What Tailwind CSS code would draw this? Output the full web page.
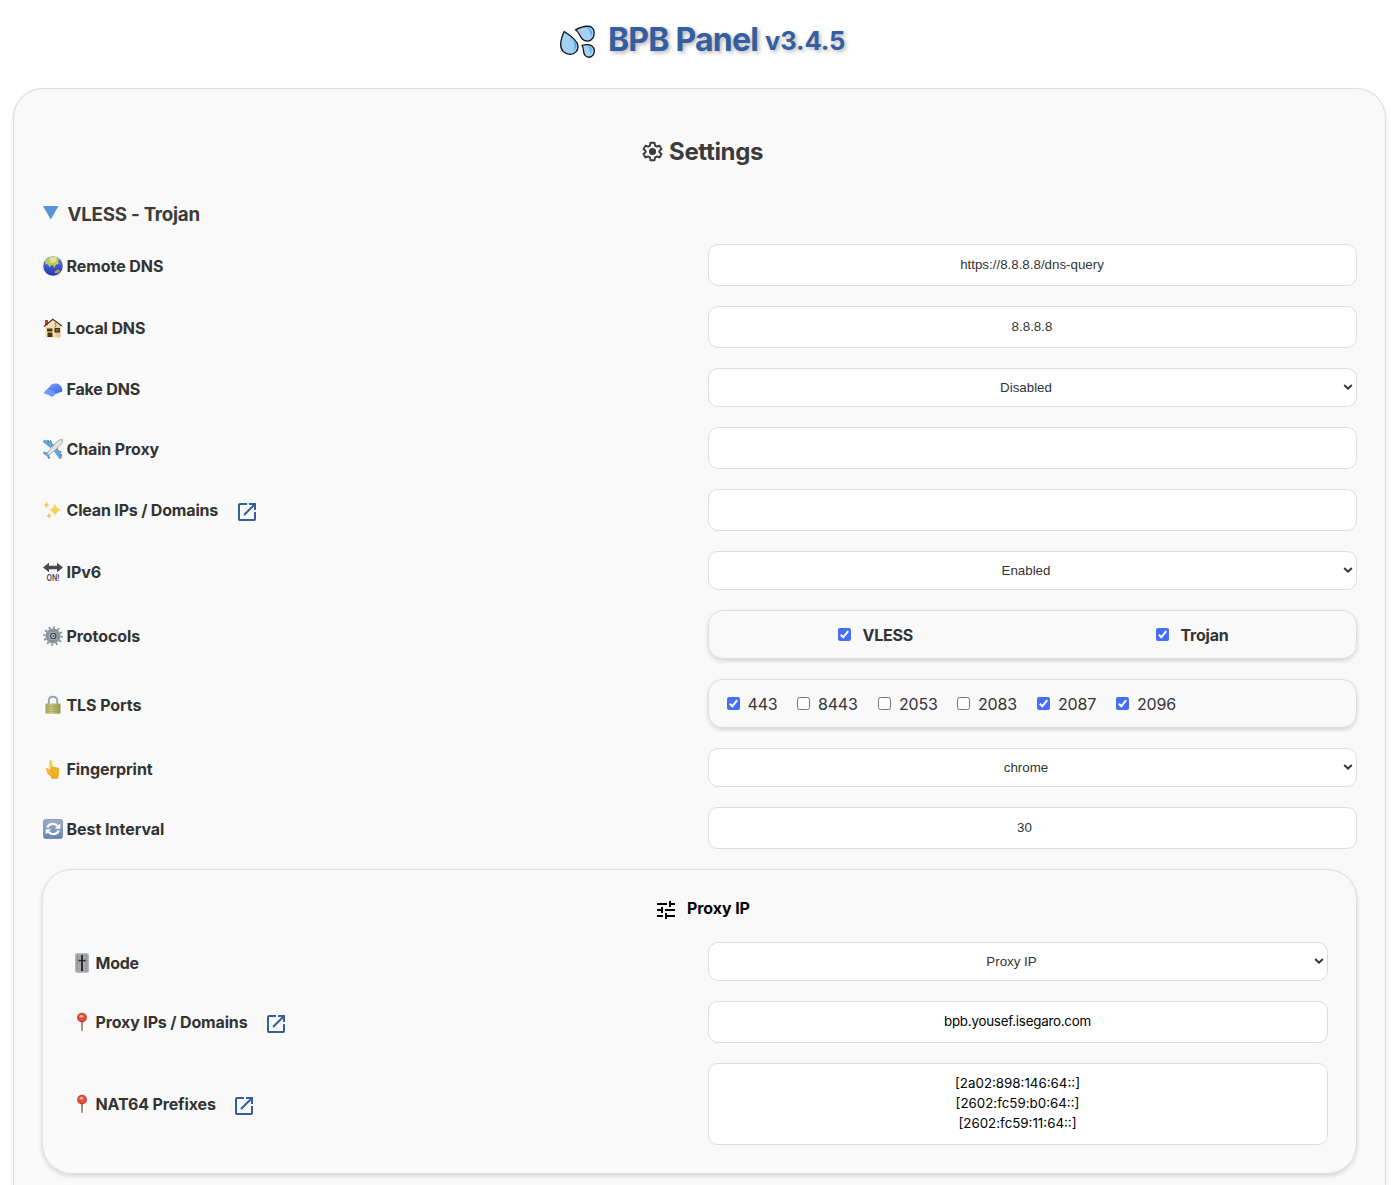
<!DOCTYPE html>
<html lang="en">
<head>
<meta charset="utf-8">
<title>BPB Panel</title>
<script src="https://cdn.jsdelivr.net/npm/@tailwindcss/browser@4"></script>
</head>
<body class="bg-white h-[1185px] overflow-hidden font-['Inter',sans-serif] text-[#333] text-base">
<svg class="absolute size-0">
  <defs>
    <symbol id="open" viewBox="0 0 24 24"><path d="M5 21q-.825 0-1.413-.587T3 19V5q0-.825.588-1.413T5 3h7v2H5v14h14v-7h2v7q0 .825-.587 1.413T19 21H5Zm4.700-5.300-1.400-1.400L17.600 5H14V3h7v7h-2V6.400l-9.300 9.300Z"/></symbol>
    <symbol id="pin" viewBox="0 0 20 20"><path d="M9 9h2l-.2 9.500q-.8 1-1.600 0z" fill="#9b8478"/><circle cx="10" cy="5.600" r="4.900" fill="#c8382b"/><circle cx="10" cy="5.200" r="4" fill="#e04e3c"/><ellipse cx="9.500" cy="4.300" rx="1.800" ry="1.300" fill="#ffb5a4"/></symbol>
    <symbol id="chev" viewBox="0 0 10 8"><path d="M1.200 2l3.800 3.700L8.800 2" fill="none" stroke="#333" stroke-width="1.900"/></symbol>
    <symbol id="on" viewBox="0 0 13 13"><rect width="13" height="13" rx="2" fill="#456ffa"/><path d="M2.800 6.700l2.500 2.600 4.900-6.100" fill="none" stroke="#fff" stroke-width="2"/></symbol>
    <symbol id="off" viewBox="0 0 13 13"><rect x=".5" y=".5" width="12" height="12" rx="2" fill="#fff" stroke="#767676"/></symbol>
    <linearGradient id="globe" x2="0" y2="1"><stop offset="0" stop-color="#5d86e0"/><stop offset="1" stop-color="#2530b4"/></linearGradient>
    <linearGradient id="cap" x2="1" y2="1"><stop offset="0" stop-color="#7ba2ff"/><stop offset="1" stop-color="#3561dd"/></linearGradient>
    <linearGradient id="lock" x2="1"><stop offset="0" stop-color="#a5a458"/><stop offset=".35" stop-color="#c8c581"/><stop offset="1" stop-color="#99994d"/></linearGradient>
    <linearGradient id="sync" x2="0" y2="1"><stop offset="0" stop-color="#9cadc8"/><stop offset="1" stop-color="#6684b0"/></linearGradient>
    <linearGradient id="hand" x2="0" y2="1"><stop offset="0" stop-color="#ffd95a"/><stop offset="1" stop-color="#eaa51c"/></linearGradient>
  </defs>
</svg>

<h1 class="h-[88px] pt-[17px] pl-[559px] flex items-start text-[#345e9f] font-bold whitespace-nowrap [text-shadow:2px_2px_4px_rgba(0,0,0,0.3)]">
  <svg class="w-[37px] h-[36px] mt-[7px]" viewBox="0 0 37 36" fill="#a3d1f3" stroke="#111" stroke-width="1.300" stroke-linejoin="round">
    <path d="M5.200 7.500Q1.700 15 1.700 20.500c0 6 4 9.800 9.300 9.800 4.800 0 8.300-3.600 8-8.300C18.700 16.500 11.500 11.500 5.200 7.500z"/>
    <path d="M16.500 5.800C23 2.500 28.500 1.200 32.500 3.200c3.200 1.800 3.300 7.300 1.300 11-2.200 3.300-6.800 3.800-10 1.300-3.200-2.500-3-7-7.300-9.700z"/>
    <path d="M23 21.300c3.500-.8 7.700-1 10 .7 2.700 2 3 6.500 1 9.200-2.200 2.700-5.800 2.700-8 .2-2.300-2.900-.7-6-3-10.100z"/>
    <path d="M10 12.500c5.500 4 6.500 8.500 4.500 14.500 3.800-3.500 5-8.500-4.500-14.500zM24 3.500c5.500-.5 8 3.500 7.500 9.500 3-4.500 1.500-10-7.500-9.500zM27.500 21.800c3.500 1 4.500 4 3.500 8.200 3-3.500 2.500-8-3.500-8.200z" fill="#5fa4e4" stroke="none"/>
  </svg>
  <span class="ml-[12px] pt-px text-[32px] leading-[44px] tracking-[-0.800px]">BPB Panel</span>
  <span class="ml-[7px] pt-[2px] text-[25.600px] leading-[44px] tracking-[-0.150px]">v3.4.5</span>
</h1>

<main class="ml-[13px] w-[1373px] h-[1097px] border border-b-0 border-[#ddd] rounded-t-[30px] bg-[#f9f9f9] shadow-[0_2px_4px_rgba(0,0,0,0.1)] pl-[28px] pr-[28px] pt-[43px] flex flex-col">
  <h2 class="h-[40px] flex items-center pl-[600px] text-[24px] font-bold tracking-[-0.330px] text-[#3b3b3b]">
    <svg class="size-[21px] mr-[6px] -mt-[2px]" viewBox="0 0 24 24" fill="none" stroke="#3b3b3b" stroke-width="2.200" stroke-linejoin="round"><path d="M9.700 2h4.600l.6 3.200 2 1.200 3.100-1.100 2.300 4-2.500 2.100v1.300l2.500 2.100-2.300 4-3.100-1.100-2 1.200-.6 3.100H9.700l-.6-3.100-2-1.200L4 18.800l-2.300-4 2.500-2.100v-1.300L1.700 9.300l2.300-4 3.100 1.100 2-1.200z"/><circle cx="12" cy="12" r="3" fill="#3b3b3b"/></svg>
    <span>Settings</span>
  </h2>
  <h3 class="mt-[29px] h-[28px] mb-[15px] pl-px flex items-center text-[18.720px] font-bold tracking-[-0.230px] text-[#3b3b3b]">
    <svg class="w-[16px] h-[14px] mr-[8.500px] -mt-[4px]" viewBox="0 0 16 14"><path d="M0 0h15.500L7.800 13.500z" fill="#5594da"/></svg>
    <span>VLESS - Trojan</span>
  </h3>

  <div class="flex flex-col gap-5 font-bold">
    <div class="h-[42px] flex justify-between">
      <label class="pl-px pt-[2px] flex items-center gap-[3.500px] tracking-[-0.060px]">
        <svg class="size-5" viewBox="0 0 20 20"><circle cx="10" cy="10" r="9.800" fill="url(#globe)"/><path d="M2 5C5 1 12-.5 16 2.500l-1 2.500 1 3-3 .5-1.500 3.500-2-3-1.500.5-1.500 2L5 8.500 2.500 8z" fill="#b9c95d"/><path d="M6 2q4-2 8 0l-1 4-5 1z" fill="#e6e28a"/><path d="M11.500 15.500l3-2 2 .5.500 1.500-2.500 2-3-.5z" fill="#b59a4a"/></svg>
        <span>Remote DNS</span>
      </label>
      <div class="w-[649px] border border-[#ddd] rounded-[10px] bg-white flex items-center justify-center pr-px font-['Liberation_Sans',sans-serif] font-normal text-[13.333px]">https://8.8.8.8/dns-query</div>
    </div>
    <div class="h-[42px] flex justify-between">
      <label class="pl-px pt-[2px] flex items-center gap-[3.500px] tracking-[-0.150px]">
        <svg class="size-5" viewBox="0 0 20 20"><path d="M2.500 9L9.500 2l8 6v11.500h-15z" fill="#f3dfb1"/><path d="M12.500 8h5v11.500h-5z" fill="#e8cd93"/><path d="M2 2h3v5H2z" fill="#b5443a"/><path d="M1 8.500L9.800 1.300 19 8" fill="none" stroke="#5b2a22" stroke-width="1.400"/><path d="M4 10.500h5.500v3H4zM4.500 15h5v4h-5zM11.500 10H17v4.500h-5.500z" fill="#4a341d"/><path d="M12 4.500l1 3-1.300 2" fill="none" stroke="#55402c" stroke-width=".7"/><path d="M5 13.500h4v1.500H5zM13 11.500h3v1h-3z" fill="#b98a38"/></svg>
        <span>Local DNS</span>
      </label>
      <div class="w-[649px] border border-[#ddd] rounded-[10px] bg-white flex items-center justify-center pr-px font-['Liberation_Sans',sans-serif] font-normal text-[13.333px]">8.8.8.8</div>
    </div>
    <div class="h-[39px] flex justify-between">
      <label class="pl-px pt-[2px] flex items-center gap-[3.500px] tracking-[-0.160px]">
        <svg class="size-5" viewBox="0 0 20 20"><path d="M5.500 9.500C7 5.500 10.500 4.300 13.300 4.500c4 .5 6.300 4 5.900 8l-6.700 2.500z" fill="url(#cap)"/><path d="M.7 14.300q1.500-3.300 4.800-5 6 0 7.500 5-1.500 3-4.500 3.500-3-2.500-7.800-3.500z" fill="#6b96fb"/><path d="M5.500 9.500q6 0 7.300 5" fill="none" stroke="#3a62d6" stroke-width=".7"/></svg>
        <span>Fake DNS</span>
      </label>
      <div class="w-[649px] border border-[#ddd] rounded-[10px] bg-white flex items-center pl-[13px] pr-[3px] font-['Liberation_Sans',sans-serif] font-normal text-[13.333px]"><span class="grow text-center pr-[13px]">Disabled</span><svg class="w-[10px] h-[8px] -mt-px"><use href="#chev"/></svg></div>
    </div>
    <div class="h-[42px] flex justify-between">
      <label class="pl-px pt-[2px] flex items-center gap-[3.500px] tracking-[-0.140px]">
        <svg class="size-5" viewBox="0 0 20 20"><path d="M10.500 5.500L1.500 1 .3 3l7.200 5.500zM14.500 9.500l4.200 9-2 1.200-5.200-7.200z" fill="#5aade9" stroke="#4b7697" stroke-width=".6"/><path d="M5 14L.5 13l-.2 1.500L4 16.500l1.500 3 1.500-.2z" fill="#5aade9" stroke="#4b7697" stroke-width=".5"/><path d="M3.500 16.500L5 13l9-10.500Q17 0 19.500.5q.5 3-2 5.500L7 15.500z" fill="#e2e4e6" stroke="#85898d" stroke-width=".7"/><path d="M7 1.500l1.500 2M4.500 1l1.500 2M16.500 12l2 1.500M17 15l2 1.500" stroke="#527993" stroke-width="1.300"/></svg>
        <span>Chain Proxy</span>
      </label>
      <div class="w-[649px] border border-[#ddd] rounded-[10px] bg-white"></div>
    </div>
    <div class="h-[42px] flex justify-between">
      <label class="pl-px flex items-center gap-[3.500px] tracking-[-0.180px]">
        <svg class="size-5" viewBox="0 0 20 20"><path d="M12 2.500q.8 6.500 6.500 7.500-5.700 1-6.500 7.500-.8-6.500-6.500-7.500 5.700-1 6.500-7.500z" fill="#fbd259"/><path d="M3.500 1.500q.4 3 3 3.500-2.600.5-3 3.500-.4-3-3-3.500 2.600-.5 3-3.500zM6 12.500q.4 2.700 3 3.200-2.600.5-3 3.200-.4-2.700-3-3.200 2.600-.5 3-3.200z" fill="#f2c65e"/></svg>
        <span class="w-[152px] whitespace-nowrap">Clean IPs / Domains</span>
        <svg class="size-6 ml-[13px] mt-[4px] fill-[#345e9f]"><use href="#open"/></svg>
      </label>
      <div class="w-[649px] border border-[#ddd] rounded-[10px] bg-white"></div>
    </div>
    <div class="h-[39px] flex justify-between">
      <label class="pl-px pt-[2px] flex items-center gap-[3.500px] tracking-[-0.080px]">
        <svg class="size-5" viewBox="0 0 20 20"><path d="M0 5.500L6 .7v3h8v-3l6 4.800-6 4.800v-3H6v3z" fill="#484848"/><text x="10" y="18.500" text-anchor="middle" textLength="13" lengthAdjust="spacingAndGlyphs" font-family="Inter" font-size="8.500" font-weight="600" letter-spacing="0" fill="#484848">ON!</text></svg>
        <span>IPv6</span>
      </label>
      <div class="w-[649px] border border-[#ddd] rounded-[10px] bg-white flex items-center pl-[13px] pr-[3px] font-['Liberation_Sans',sans-serif] font-normal text-[13.333px]"><span class="grow text-center pr-[13px]">Enabled</span><svg class="w-[10px] h-[8px] -mt-px"><use href="#chev"/></svg></div>
    </div>
    <div class="h-[49px] flex justify-between">
      <label class="pl-px pt-[3px] flex items-center gap-[3.500px] tracking-[-0.080px]">
        <svg class="size-5" viewBox="0 0 20 20" fill="none"><circle cx="10" cy="10" r="8.600" stroke="#7e868f" stroke-width="2.400" stroke-dasharray="1.600 2.900"/><circle cx="10" cy="10" r="6.300" stroke="#8b949e" stroke-width="2.600"/><circle cx="10" cy="10" r="4.700" fill="#b4bcc5" stroke="#69717b" stroke-width=".8"/><circle cx="10.300" cy="10" r="2.600" fill="#dfe5ea" stroke="#3a414a" stroke-width="1.300"/><circle cx="10.500" cy="10" r="1" fill="#333"/></svg>
        <span>Protocols</span>
      </label>
      <div class="w-[649px] border border-[#ddd] rounded-[15px] shadow-[0_2px_4px_rgba(0,0,0,0.15)] flex items-center">
        <span class="ml-[129px] w-[318px] flex items-center gap-[11.500px] tracking-[-0.220px]"><svg class="size-[13px]"><use href="#on"/></svg>VLESS</span>
        <span class="flex items-center gap-[11.500px] tracking-[-0.220px]"><svg class="size-[13px]"><use href="#on"/></svg>Trojan</span>
      </div>
    </div>
    <div class="h-[49px] flex justify-between">
      <label class="pl-px pt-[3px] flex items-center gap-[3.500px] tracking-[-0.080px]">
        <svg class="size-5" viewBox="0 0 20 20"><path d="M5.800 10V6q0-4.200 4.200-4.200T14.200 6v4" fill="none" stroke="#98a7b5" stroke-width="1.900"/><rect x="2.500" y="8.500" width="15" height="10.300" rx="1" fill="url(#lock)"/><path d="M2.500 11.500h15M2.500 14h15M2.500 16.500h15" stroke="#8f8f45" stroke-width=".3"/></svg>
        <span>TLS Ports</span>
      </label>
      <div class="w-[649px] border border-[#ddd] rounded-[15px] shadow-[0_2px_4px_rgba(0,0,0,0.15)] flex items-center pl-[18px] font-normal tracking-[-0.200px]">
        <span class="w-[70px] flex items-center gap-[7.500px]"><svg class="size-[13px]"><use href="#on"/></svg>443</span>
        <span class="w-[81px] flex items-center gap-[8px]"><svg class="size-[13px]"><use href="#off"/></svg>8443</span>
        <span class="w-[79px] flex items-center gap-[8px]"><svg class="size-[13px]"><use href="#off"/></svg>2053</span>
        <span class="w-[80px] flex items-center gap-[8px]"><svg class="size-[13px]"><use href="#off"/></svg>2083</span>
        <span class="w-[79px] flex items-center gap-[8px]"><svg class="size-[13px]"><use href="#on"/></svg>2087</span>
        <span class="flex items-center gap-[8px]"><svg class="size-[13px]"><use href="#on"/></svg>2096</span>
      </div>
    </div>
    <div class="h-[39px] flex justify-between">
      <label class="pl-px pt-[2px] flex items-center gap-[3.500px] tracking-[-0.070px]">
        <svg class="size-5" viewBox="0 0 20 20"><path d="M6.200 1.300q1.400-1.600 2.600.2l1 6 5.200 1q1.800.6 1.500 3l-.8 5-1 3.300H8.500l-1-2.500Q3 14 2.800 9q1.200-.8 2.200.3l1.700 2z" fill="url(#hand)"/><path d="M9.800 8l-.3 3.500M12.300 8.500l-.3 3M14.500 9l-.3 3M7 11.500q3 0 4 3" fill="none" stroke="#d18b14" stroke-width=".7"/></svg>
        <span>Fingerprint</span>
      </label>
      <div class="w-[649px] border border-[#ddd] rounded-[10px] bg-white flex items-center pl-[13px] pr-[3px] font-['Liberation_Sans',sans-serif] font-normal text-[13.333px]"><span class="grow text-center pr-[13px]">chrome</span><svg class="w-[10px] h-[8px] -mt-px"><use href="#chev"/></svg></div>
    </div>
    <div class="h-[42px] flex justify-between">
      <label class="pl-px pt-[2px] flex items-center gap-[3.500px] tracking-[-0.030px]">
        <svg class="size-5" viewBox="0 0 20 20"><rect x=".3" y=".3" width="19.400" height="19.400" rx="3" fill="url(#sync)" stroke="#6681a6" stroke-width=".6"/><path d="M4.200 8.500Q6 4.800 10 4.800q3 0 4.800 2.500M15.800 11.500Q14 15.200 10 15.200q-3 0-4.800-2.500" fill="none" stroke="#fff" stroke-width="2.300"/><path d="M17.300 4.500v5.300h-5.500zM2.700 15.500v-5.300h5.500z" fill="#fff"/></svg>
        <span>Best Interval</span>
      </label>
      <div class="w-[649px] border border-[#ddd] rounded-[10px] bg-white flex items-center justify-center pr-[16px] font-['Liberation_Sans',sans-serif] font-normal text-[13.333px]">30</div>
    </div>

    <section class="h-[305px] border border-[#ddd] rounded-[30px] shadow-[0_2px_4px_rgba(0,0,0,0.15)] pt-[25px] pl-[28px] pr-[28px]">
      <h4 class="h-[26px] mb-[21px] flex items-center pl-[583px] text-black font-bold tracking-[-0.080px]">
        <svg class="size-6 mt-[3px] mr-[9px]" viewBox="0 0 24 24"><path d="M3 17v2h6v-2H3zM3 5v2h10V5H3zm10 16v-2h8v-2h-8v-2h-2v6h2zM7 9v2H3v2h4v2h2V9H7zm14 4v-2H11v2h10zm-6-4h2V7h4V5h-4V3h-2v6z"/></svg>
        <span>Proxy IP</span>
      </h4>
      <div class="flex flex-col gap-5">
        <div class="h-[39px] flex justify-between">
          <label class="pl-px pt-[2px] flex items-center gap-[3.500px] tracking-[-0.250px]">
            <svg class="size-5" viewBox="0 0 20 20"><rect x="3.200" y=".3" width="13.600" height="19.400" rx="2" fill="#a1a6ab"/><path d="M5.500 3v14M14.500 3v14" stroke="#7f858b" stroke-width="1" stroke-dasharray="1 1"/><path d="M10 2v16" stroke="#222" stroke-width="1.800"/><path d="M6.500 6.500q3.500 1.500 7 0v2q-3.500-1-7 0z" fill="#222"/></svg>
            <span>Mode</span>
          </label>
          <div class="w-[620px] border border-[#ddd] rounded-[10px] bg-white flex items-center pl-[13px] pr-[3px] font-['Liberation_Sans',sans-serif] font-normal text-[13.333px]"><span class="grow text-center pr-[13px]">Proxy IP</span><svg class="w-[10px] h-[8px] -mt-px"><use href="#chev"/></svg></div>
        </div>
        <div class="h-[42px] flex justify-between">
          <label class="pl-px flex items-center gap-[3.500px] tracking-[-0.150px]">
            <svg class="size-5"><use href="#pin"/></svg>
            <span class="w-[152px] whitespace-nowrap">Proxy IPs / Domains</span>
            <svg class="size-6 ml-[13px] mt-[4px] fill-[#345e9f]"><use href="#open"/></svg>
          </label>
          <div class="w-[620px] border border-[#ddd] rounded-[10px] bg-white flex items-center justify-center pr-px font-normal text-[13.333px] tracking-[-0.220px] text-black">bpb.yousef.isegaro.com</div>
        </div>
        <div class="h-[82px] flex justify-between">
          <label class="pl-px flex items-center gap-[3.500px] tracking-[-0.140px]">
            <svg class="size-5"><use href="#pin"/></svg>
            <span class="w-[120px] whitespace-nowrap">NAT64 Prefixes</span>
            <svg class="size-6 ml-[13px] mt-[4px] fill-[#345e9f]"><use href="#open"/></svg>
          </label>
          <div class="w-[620px] border border-[#ddd] rounded-[10px] bg-white flex flex-col items-center justify-center pb-[2px] pr-px font-normal text-[13.333px] leading-5 text-black"><span>[2a02:898:146:64::]</span><span>[2602:fc59:b0:64::]</span><span>[2602:fc59:11:64::]</span></div>
        </div>
      </div>
    </section>
  </div>
</main>
</body>
</html>
